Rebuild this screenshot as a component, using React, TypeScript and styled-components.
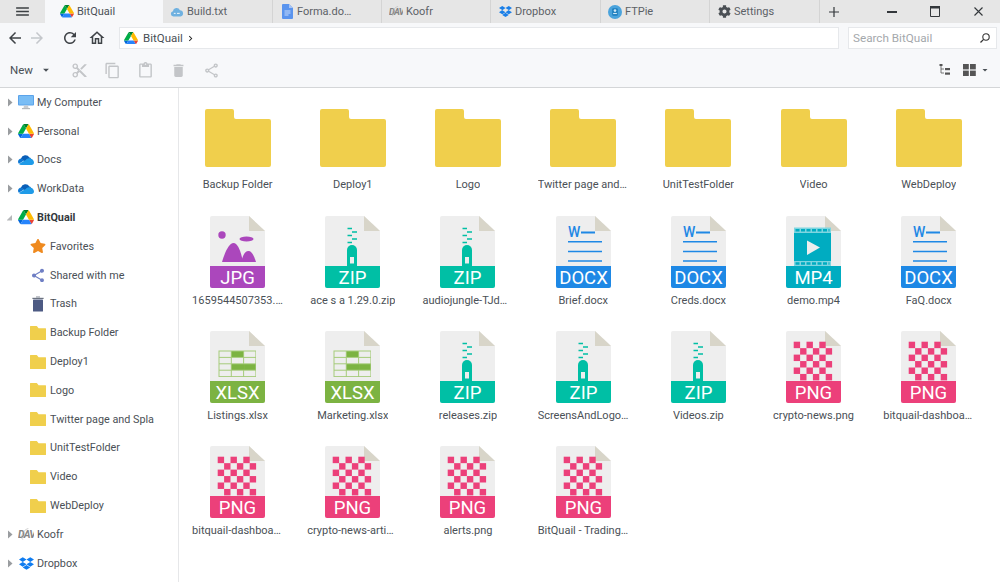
import React from "react";
import styled, { createGlobalStyle } from "styled-components";
import { FaDropbox, FaCog, FaStar } from "react-icons/fa";
import {
  MdArrowBack, MdArrowForward, MdRefresh, MdOutlineHome, MdContentCut, MdOutlineContentCopy,
  MdOutlineContentPaste, MdDelete, MdOutlineShare, MdShare, MdMenu,
  MdArrowDropDown, MdChevronRight,
} from "react-icons/md";

const Global = createGlobalStyle`
  html, body { margin: 0; padding: 0; background: #fff; }
  * { box-sizing: border-box; }
  body { font-family: Roboto, "Liberation Sans", sans-serif; font-size: 11px; color: #4a5056; }
`;

const Page = styled.div`width: 1000px; height: 582px; overflow: hidden; display: flex; flex-direction: column;`;
const TabBar = styled.div`height: 23px; display: flex; background: #e6e6e6; flex: none;`;
const MenuBtn = styled.div`width: 45px; display: flex; align-items: center; justify-content: center; color: #3c4043; font-size: 17px;`;
const Tab = styled.div<{ $active?: boolean; $w: number }>`
  width: ${(p) => p.$w}px; display: flex; align-items: center; gap: 3px; padding-left: ${(p) => (p.$active ? 15 : 7)}px;
  background: ${(p) => (p.$active ? "#f7f8fa" : "transparent")};
  border-right: ${(p) => (p.$active ? "none" : "1px solid #d4d4d4")};
  font-size: 11px; color: ${(p) => (p.$active ? "#4a5056" : "#5c6166")}; white-space: nowrap; overflow: hidden; flex: none;
`;
const TabIcon = styled.span`width: 14px; display: flex; align-items: center; justify-content: center; flex: none;`;
const WinBtn = styled.div<{ $w: number; $ml?: number }>`
  width: ${(p) => p.$w}px; margin-left: ${(p) => p.$ml ?? 0}px; display: flex; align-items: center; justify-content: center; flex: none;
`;

const NavRow = styled.div`height: 30px; background: #f7f8fa; display: flex; align-items: center; padding-left: 4px; flex: none;`;
const NavBtn = styled.div<{ $dim?: boolean; $ml?: number }>`
  width: 22px; height: 22px; display: flex; align-items: center; justify-content: center; font-size: 18px; flex: none;
  margin-left: ${(p) => p.$ml ?? 0}px; color: ${(p) => (p.$dim ? "#c4c7cb" : "#3f4347")};
`;
const Address = styled.div`
  margin-left: 11px; width: 720px; height: 22px; background: #fff; border: 1px solid #e6e8eb; display: flex; align-items: center;
  gap: 5px; padding-left: 4px; font-size: 11.5px; color: #4a5056;
`;
const Crumb = styled.span`margin-left: -3px; display: flex; color: #222;`;
const Search = styled.div`
  margin-left: 9px; width: 149px; height: 22px; background: #fff; border: 1px solid #e6e8eb; display: flex; align-items: center;
  justify-content: space-between; padding: 0 5px 0 4px; font-size: 11.7px; color: #a4a8ac;
`;
const ActionRow = styled.div`
  height: 35px; background: #f7f8fa; border-bottom: 1px solid #d4d6d8; display: flex; align-items: center; flex: none; padding-left: 10px;
`;
const NewBtn = styled.div`width: 52.5px; display: flex; align-items: center; color: #4a5056; font-size: 11.5px; flex: none;`;
const NewCaret = styled.span`margin-left: 6px; display: flex;`;
const ActBtn = styled.div`width: 33px; display: flex; justify-content: center; font-size: 17px; color: #c3c5c8; flex: none;`;
const RightTools = styled.div`margin-left: auto; display: flex; align-items: center; gap: 12px; padding-right: 10px; color: #4a5056;`;
const ViewCaret = styled.span`margin-left: -9px; margin-right: -1px; display: flex;`;

const Body = styled.div`flex: 1; display: flex; min-height: 0;`;
const Sidebar = styled.div`width: 179px; border-right: 1px solid #e6e7e9; overflow: hidden; flex: none;`;
const TreeRow = styled.div<{ $child?: boolean; $bold?: boolean }>`
  width: 154px; height: 28.8px; display: flex; align-items: center; white-space: nowrap; overflow: hidden;
  padding-left: ${(p) => (p.$child ? 30 : 7)}px; font-weight: ${(p) => (p.$bold ? 700 : 400)};
  color: ${(p) => (p.$bold ? "#33383c" : "#4a5056")}; font-size: 10.8px;
`;
const Caret = styled.div`width: 11px; flex: none; display: flex; align-items: center;`;
const TreeIcon = styled.div<{ $child?: boolean }>`
  width: 16px; height: 16px; display: flex; align-items: center; justify-content: center; flex: none; margin-right: ${(p) => (p.$child ? 4 : 3)}px;
`;

const Grid = styled.div`
  flex: 1; display: grid; grid-template-columns: repeat(7, 115.2px); grid-auto-rows: 115.2px; padding: 12.4px 0 0 1px; align-content: start;
`;
const Cell = styled.div`display: flex; flex-direction: column; align-items: center; min-width: 0;`;
const Thumb = styled.div`height: 72px; display: flex; align-items: center; justify-content: center; flex: none;`;
const Label = styled.div`
  margin-top: 6px; max-width: 91px; height: 14px; line-height: 14px; font-size: 11px; color: #4a5056;
  white-space: nowrap; overflow: hidden; text-overflow: ellipsis;
`;

const DriveIcon = ({ size = 16 }: { size?: number }) => (
  <svg width={size} height={size * 0.894} viewBox="0 0 87.3 78">
    <path d="m6.6 66.85 3.85 6.65c.8 1.4 1.95 2.5 3.3 3.3l13.75-23.8h-27.5c0 1.55.4 3.1 1.2 4.5z" fill="#0066da" />
    <path d="m43.65 25-13.75-23.8c-1.35.8-2.5 1.9-3.3 3.3l-25.4 44a9.06 9.06 0 0 0 -1.2 4.5h27.5z" fill="#00ac47" />
    <path d="m73.55 76.8c1.35-.8 2.5-1.9 3.3-3.3l1.6-2.75 7.65-13.25c.8-1.4 1.2-2.95 1.2-4.5h-27.502l5.852 11.5z" fill="#ea4335" />
    <path d="m43.65 25 13.75-23.8c-1.35-.8-2.9-1.2-4.5-1.2h-18.5c-1.6 0-3.15.45-4.5 1.2z" fill="#00832d" />
    <path d="m59.8 53h-32.3l-13.75 23.8c1.35.8 2.9 1.2 4.5 1.2h50.8c1.6 0 3.15-.45 4.5-1.2z" fill="#2684fc" />
    <path d="m73.4 26.5-12.7-22c-.8-1.4-1.95-2.5-3.3-3.3l-13.75 23.8 16.15 28h27.45c0-1.55-.4-3.1-1.2-4.5z" fill="#ffba00" />
  </svg>
);
const OneDrive = () => (
  <svg width="16" height="11" viewBox="0 0 16 11">
    <path d="M3 4.6A4.6 4.6 0 0 1 11.4 3.6 3.6 3.6 0 0 1 13 4.4L8 8 3 5z" fill="#0a5fb8" />
    <path d="M3.4 4.4C1.4 4.5 0 6 0 7.6c0 .9.3 1.6.9 2.2L6 6.6z" fill="#0f78d4" />
    <path d="M11 4.3c-1.6 0-2.6.8-3.2 1.6L4 8 1 10c.5.6 1.3 1 2.2 1H13.5c1.5 0 2.5-1 2.5-2.4 0-2.2-2.2-4.2-5-4.3z" fill="#1f9be8" />
  </svg>
);
const Koofr = ({ w = 16 }: { w?: number }) => (
  <svg width={w} height={w * 0.75} viewBox="0 0 20 15">
    <text x="0" y="12.5" fontFamily="Roboto, sans-serif" fontSize="13" fontWeight="700" fontStyle="italic" fill="#858585" letterSpacing="-1">DAV</text>
    <path d="M6 14.500C3 12 5 3 13 .5" fill="none" stroke="#aaa" strokeWidth=".7" />
  </svg>
);
const Monitor = () => (
  <svg width="16" height="16" viewBox="0 0 16 16">
    <rect x="0" y="1" width="16" height="10.5" rx="1" fill="#5ba3ea" />
    <rect x="1" y="2" width="14" height="8.5" fill="#79bdf5" />
    <path d="M6 11.5h4l.5 2.5h-5z" fill="#c8ccd0" />
    <rect x="4" y="14" width="8" height="1.2" fill="#b5b9bd" />
  </svg>
);
const ShareColor = () => <MdShare size={17} color="#6f7fc4" />;
const TrashBin = () => (
  <svg width="12" height="16" viewBox="0 0 12 16">
    <rect x="1" y="3.6" width="10" height="12" rx=".6" fill="#4d5a83" />
    <rect x="0.4" y="1.8" width="11.2" height="1.2" fill="#6b7280" />
    <rect x="4" y=".4" width="4" height="1.2" fill="#9aa0aa" />
  </svg>
);
const MiniFolder = () => (
  <svg width="16" height="14" viewBox="0 0 16 14">
    <path d="M.5 0H6.6a.5.5 0 0 1 .4.2L8.6 2.2H15.5a.5.5 0 0 1 .5.5V13.5a.5.5 0 0 1-.5.5H.5a.5.5 0 0 1-.5-.5V.5A.5.5 0 0 1 .5 0z" fill="#f0cf4c" />
  </svg>
);
const TreeCaret = ({ open }: { open?: boolean }) => (
  <svg width="6" height="9" viewBox="0 0 6 9">
    {open ? <path d="M6 2v5.5H.5z" fill="#b5b7ba" transform="translate(-1 0)" /> : <path d="M1 .5 5.5 4.5 1 8.5z" fill="#9a9da0" />}
  </svg>
);
const DocsIcon = () => (
  <svg width="11" height="15" viewBox="0 0 11 15">
    <path d="M1 0H7L11 4V14a1 1 0 0 1-1 1H1a1 1 0 0 1-1-1V1a1 1 0 0 1 1-1z" fill="#5a94ee" />
    <path d="M7 0 11 4H7z" fill="#a9c6f5" />
    <path d="M2.5 7h6M2.5 9h6M2.5 11h4" stroke="#d5e3fb" strokeWidth=".9" />
  </svg>
);
const CloudTab = () => (
  <svg width="14" height="10" viewBox="0 0 15 11">
    <path d="M3.5 10.5A3 3 0 0 1 3 4.6 4 4 0 0 1 10.7 3.6 3.5 3.5 0 0 1 11.5 10.5z" fill="#6fb1e0" />
    <path d="M4 7h2M7.5 7h3" stroke="#fff" strokeWidth="1" />
  </svg>
);
const FtpIcon = () => (
  <svg width="14" height="14" viewBox="0 0 15 15">
    <circle cx="7.5" cy="7.5" r="7.5" fill="#4aa3dc" />
    <rect x="4.5" y="3.5" width="6" height="8" rx="1" fill="#1f7fbe" />
    <circle cx="7.5" cy="6" r="1.4" fill="#cfe8f7" />
    <rect x="5.5" y="8.5" width="4" height="1.2" fill="#cfe8f7" />
  </svg>
);

const PageShape = ({ band, text, children }: { band: string; text: string; children?: React.ReactNode }) => (
  <svg width="55" height="72" viewBox="0 0 55 72">
    <path d="M2 0H39L55 15V70a2 2 0 0 1-2 2H2a2 2 0 0 1-2-2V2a2 2 0 0 1 2-2z" fill="#eeeeee" />
    <path d="M39 0 55 15H39z" fill="#d8d5c9" />
    {children}
    <path d="M0 50H55V70a2 2 0 0 1-2 2H2a2 2 0 0 1-2-2z" fill={band} />
    <text x="27.5" y="68" textAnchor="middle" fontFamily="Roboto, sans-serif" fontSize="18.5" fill="#fff">{text}</text>
  </svg>
);
const Folder = () => (
  <svg width="66" height="72" viewBox="0 -9 66 72">
    <path d="M2 0H27a2 2 0 0 1 2 2V8a2 2 0 0 0 2 2H64a2 2 0 0 1 2 2V56a2 2 0 0 1-2 2H2a2 2 0 0 1-2-2V2a2 2 0 0 1 2-2z" fill="#f0cf4c" />
  </svg>
);
const Jpg = () => (
  <PageShape band="#ab47bc" text="JPG">
    <circle cx="12" cy="19" r="3.7" fill="#ab47bc" />
    <ellipse cx="36.5" cy="23" rx="7" ry="2.6" fill="#ab47bc" />
    <path d="M12 46C15 36 19 27 23.5 27 28 27 31 36 33 46z" fill="#ab47bc" />
    <path d="M31 46C33 39 35 35 38.5 35 42 35 44 40 46 46z" fill="#ab47bc" />
  </PageShape>
);
const Zip = () => (
  <PageShape band="#00bfa5" text="ZIP">
    <path d="M22.5 12.5h4.500M27 16h5M22.500 19.500h4.500M27 23h5M22.500 26.500h4.500" stroke="#00bfa5" strokeWidth="1.4" />
    <path d="M22 34a5 5 0 0 1 10 0V50H22z" fill="#00bfa5" />
    <rect x="25" y="41" width="4" height="6.500" fill="#eeeeee" />
  </PageShape>
);
const Docx = () => (
  <PageShape band="#1e88e5" text="DOCX">
    <text x="12" y="21" fontFamily="Roboto, sans-serif" fontSize="14" fontWeight="500" fill="#1e88e5">W</text>
    <path d="M25 16.500H39" stroke="#1e88e5" strokeWidth="2" />
    <path d="M12 25.700H46M12 35.500H46M12 45H46" stroke="#1e88e5" strokeWidth="1.500" />
  </PageShape>
);
const Mp4 = () => (
  <PageShape band="#00acc1" text="MP4">
    <rect x="8" y="17" width="37" height="33" fill="#00acc1" />
    <rect x="8" y="11.500" width="37" height="5.500" fill="#7fd5e0" />
    <rect x="8" y="45" width="37" height="5" fill="#7fd5e0" />
    <path d="M9.500 14.200H43.500M9.500 47.500H43.500" stroke="#00acc1" strokeWidth="2.500" strokeDasharray="4 1.500" />
    <path d="M21 24.500 34 31.500 21 39z" fill="#eeeeee" />
  </PageShape>
);
const Xlsx = () => {
  const on = new Set(["0-1", "2-1", "2-2"]);
  return (
    <PageShape band="#7cb342" text="XLSX">
      <rect x="8.500" y="19.500" width="37.500" height="26.500" fill="#a5cb7a" />
      {[0, 1, 2, 3].flatMap((r) =>
        [0, 1, 2].map((c) => (
          <rect
            key={`${r}-${c}`}
            x={9.5 + c * 12.3}
            y={20.5 + r * 6.4}
            width={on.has(`${r}-${c}`) && c === 1 && r === 2 ? 12.3 : 11.3}
            height="5.400"
            fill={on.has(`${r}-${c}`) ? "#7cb342" : "#eeeeee"}
          />
        )),
      )}
    </PageShape>
  );
};
const Png = () => (
  <PageShape band="#ec407a" text="PNG">
    {[0, 1, 2, 3, 4, 5].flatMap((r) =>
      [0, 1, 2].map((c) => (
        <rect key={`${r}-${c}`} x={7.7 + c * 12.8 + (r % 2 ? 6.4 : 0)} y={10.7 + r * 6.45} width="6.400" height="6.450" fill="#ec407a" />
      )),
    )}
  </PageShape>
);

const kinds: Record<string, React.FC> = { f: Folder, jpg: Jpg, zip: Zip, docx: Docx, mp4: Mp4, xlsx: Xlsx, png: Png };
const items: [string, string][] = [
  ["f", "Backup Folder"], ["f", "Deploy1"], ["f", "Logo"], ["f", "Twitter page and Splash"], ["f", "UnitTestFolder"], ["f", "Video"], ["f", "WebDeploy"],
  ["jpg", "1659544507353.jpg"], ["zip", "ace s a 1.29.0.zip"], ["zip", "audiojungle-TJdWW.zip"], ["docx", "Brief.docx"], ["docx", "Creds.docx"], ["mp4", "demo.mp4"], ["docx", "FaQ.docx"],
  ["xlsx", "Listings.xlsx"], ["xlsx", "Marketing.xlsx"], ["zip", "releases.zip"], ["zip", "ScreensAndLogos.zip"], ["zip", "Videos.zip"], ["png", "crypto-news.png"], ["png", "bitquail-dashboard.png"],
  ["png", "bitquail-dashboard2.png"], ["png", "crypto-news-article.png"], ["png", "alerts.png"], ["png", "BitQuail - Trading.png"],
];

const tree: { name: string; icon: React.ReactNode; caret?: "open" | "closed"; child?: boolean; bold?: boolean }[] = [
  { name: "My Computer", icon: <Monitor />, caret: "closed" },
  { name: "Personal", icon: <DriveIcon />, caret: "closed" },
  { name: "Docs", icon: <OneDrive />, caret: "closed" },
  { name: "WorkData", icon: <OneDrive />, caret: "closed" },
  { name: "BitQuail", icon: <DriveIcon />, caret: "open", bold: true },
  { name: "Favorites", icon: <FaStar size={16} color="#ef8a1f" />, child: true },
  { name: "Shared with me", icon: <ShareColor />, child: true },
  { name: "Trash", icon: <TrashBin />, child: true },
  ...["Backup Folder", "Deploy1", "Logo", "Twitter page and Splash", "UnitTestFolder", "Video", "WebDeploy"].map((name) => ({ name, icon: <MiniFolder />, child: true })),
  { name: "Koofr", icon: <Koofr />, caret: "closed" },
  { name: "Dropbox", icon: <FaDropbox size={15} color="#0f7cf0" />, caret: "closed" },
];

const tabs: { name: string; icon: React.ReactNode; w: number }[] = [
  { name: "Build.txt", icon: <CloudTab />, w: 110 },
  { name: "Forma.do…", icon: <DocsIcon />, w: 109 },
  { name: "Koofr", icon: <Koofr w={14} />, w: 109 },
  { name: "Dropbox", icon: <FaDropbox size={13} color="#1a7fe8" />, w: 110 },
  { name: "FTPie", icon: <FtpIcon />, w: 109 },
  { name: "Settings", icon: <FaCog size={13} color="#4a4f54" />, w: 110 },
];

export default function App() {
  return (
    <Page>
      <Global />
      <TabBar>
        <MenuBtn><MdMenu /></MenuBtn>
        <Tab $active $w={118}><TabIcon><DriveIcon size={14} /></TabIcon>BitQuail</Tab>
        {tabs.map((t) => <Tab key={t.name} $w={t.w}><TabIcon>{t.icon}</TabIcon>{t.name}</Tab>)}
        <WinBtn $w={27}><svg width="10" height="10" viewBox="0 0 10 10"><path d="M5 0v10M0 5h10" stroke="#33373b" strokeWidth="1.200" /></svg></WinBtn>
        <WinBtn $w={43} $ml={23.5}><svg width="10" height="2" viewBox="0 0 10 2"><rect width="10" height="2" fill="#33373b" /></svg></WinBtn>
        <WinBtn $w={43}><svg width="10" height="11" viewBox="0 0 10 11"><path d="M.5 1h9v9.500h-9z" fill="none" stroke="#33373b" /><rect width="10" height="2.500" fill="#33373b" /></svg></WinBtn>
        <WinBtn $w={43}><svg width="9" height="9" viewBox="0 0 9 9"><path d="M.5.500l8 8M8.500.500l-8 8" stroke="#33373b" strokeWidth="1.100" /></svg></WinBtn>
      </TabBar>
      <NavRow>
        <NavBtn><MdArrowBack /></NavBtn>
        <NavBtn $dim><MdArrowForward /></NavBtn>
        <NavBtn $ml={11}><MdRefresh /></NavBtn>
        <NavBtn $ml={5}><MdOutlineHome /></NavBtn>
        <Address><DriveIcon size={14} />BitQuail<Crumb><MdChevronRight size={11} /></Crumb></Address>
        <Search>Search BitQuail<svg width="12" height="12" viewBox="0 0 12 12"><circle cx="7" cy="5" r="3.200" fill="none" stroke="#333" strokeWidth="1.100" /><path d="M4.600 7.400 1.500 10.500" stroke="#333" strokeWidth="1.300" /></svg></Search>
      </NavRow>
      <ActionRow>
        <NewBtn>New<NewCaret><MdArrowDropDown size={14} /></NewCaret></NewBtn>
        <ActBtn><MdContentCut /></ActBtn>
        <ActBtn><MdOutlineContentCopy /></ActBtn>
        <ActBtn><MdOutlineContentPaste /></ActBtn>
        <ActBtn><MdDelete /></ActBtn>
        <ActBtn><MdOutlineShare /></ActBtn>
        <RightTools>
          <svg width="12" height="12" viewBox="0 0 12 12"><path d="M2 1v8h3M2 5h3" fill="none" stroke="#555" strokeWidth=".8" /><rect x="0.500" y="0" width="3" height="2" fill="#555" /><rect x="6" y="4" width="5" height="2.200" fill="#555" /><rect x="6" y="8.500" width="5" height="2.200" fill="#555" /></svg>
          <svg width="13" height="12" viewBox="0 0 13 12"><rect width="5.800" height="5.400" fill="#555" /><rect x="7" width="5.800" height="5.400" fill="#555" /><rect y="6.600" width="5.800" height="5.400" fill="#555" /><rect x="7" y="6.600" width="5.800" height="5.400" fill="#555" /></svg>
          <ViewCaret><MdArrowDropDown size={12} /></ViewCaret>
        </RightTools>
      </ActionRow>
      <Body>
        <Sidebar>
          {tree.map((t) => (
            <TreeRow key={t.name + (t.child ? "c" : "")} $child={t.child} $bold={t.bold}>
              {t.caret && <Caret><TreeCaret open={t.caret === "open"} /></Caret>}
              <TreeIcon $child={t.child}>{t.icon}</TreeIcon>
              {t.name}
            </TreeRow>
          ))}
        </Sidebar>
        <Grid>
          {items.map(([k, name], i) => {
            const Art = kinds[k];
            return (
              <Cell key={i}>
                <Thumb><Art /></Thumb>
                <Label>{name}</Label>
              </Cell>
            );
          })}
        </Grid>
      </Body>
    </Page>
  );
}
